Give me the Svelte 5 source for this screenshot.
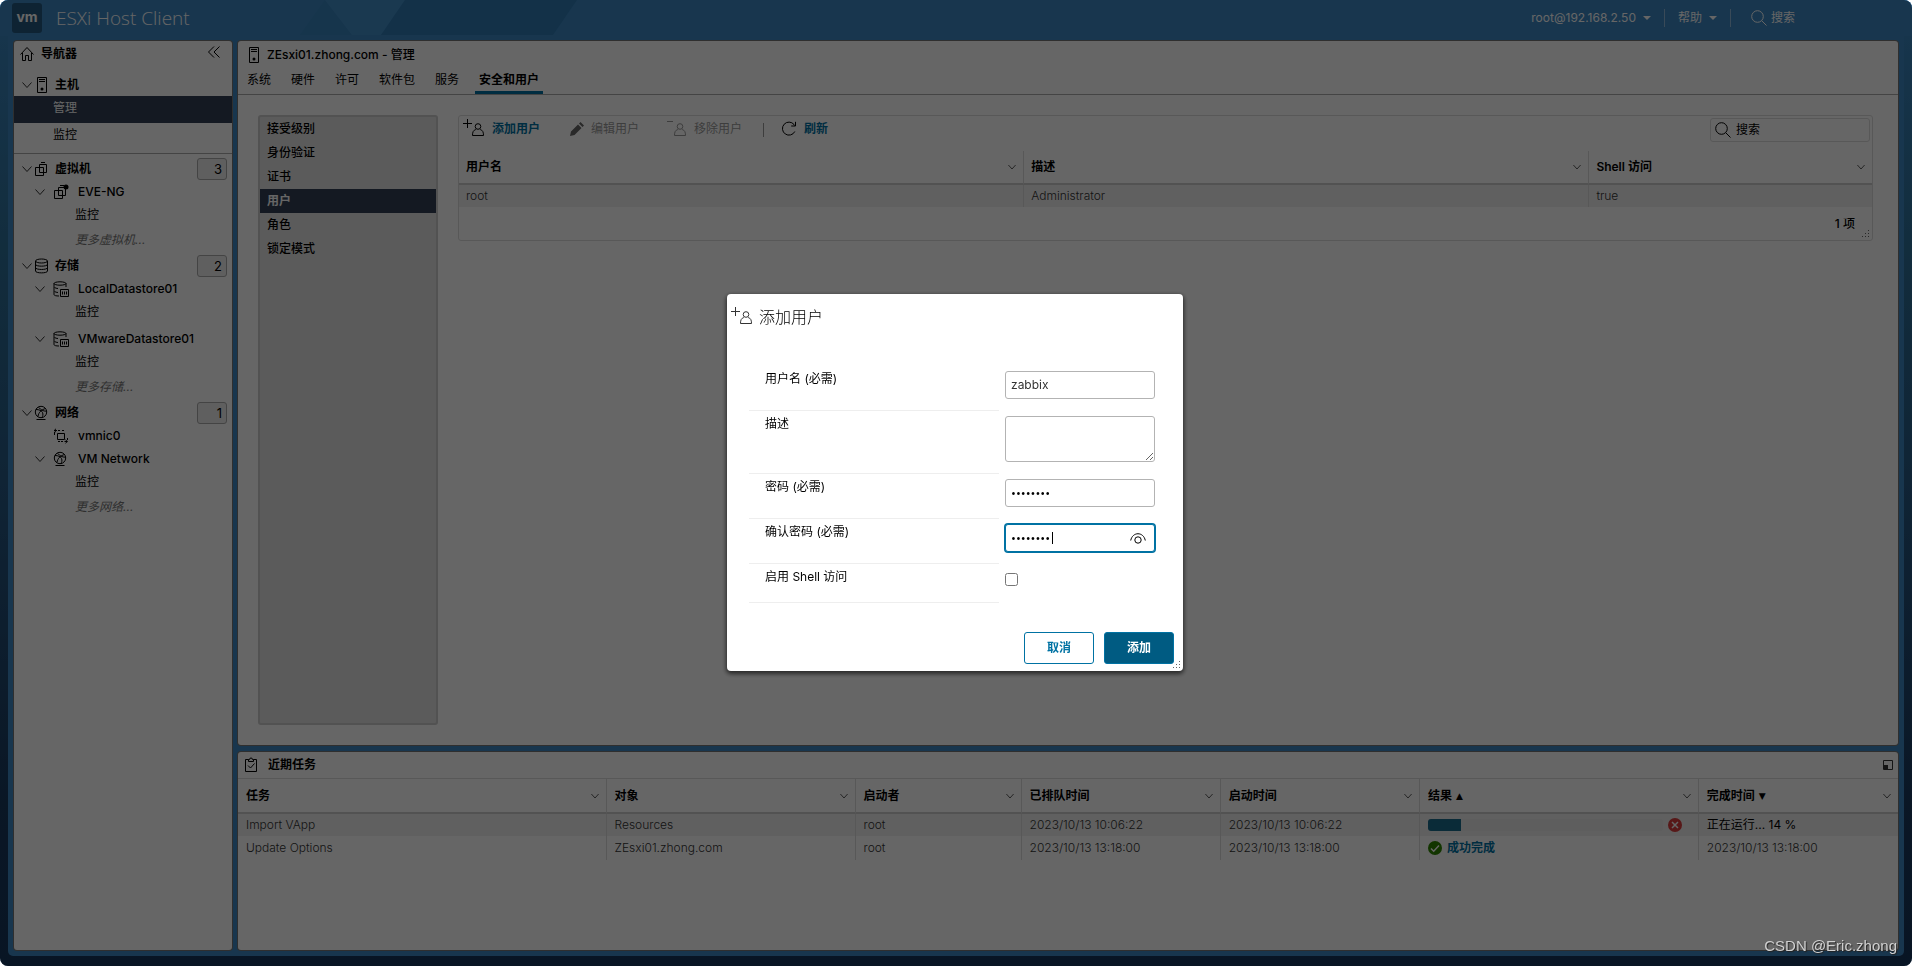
<script>
  let username = $state('zabbix');
  let description = $state('');
  let password = $state('password');
  let confirm = $state('password');
  let shellAccess = $state(false);

  const tabs = ['系统', '硬件', '许可', '软件包', '服务', '安全和用户'];
  const menu = ['接受级别', '身份验证', '证书', '用户', '角色', '锁定模式'];
  const userCols = ['用户名', '描述', 'Shell 访问'];

  const groups = [
    {
      name: '虚拟机', icon: 'vm', count: 3, more: '更多虚拟机...',
      items: [{ name: 'EVE-NG', icon: 'vmOn', open: true }],
    },
    {
      name: '存储', icon: 'storage', count: 2, more: '更多存储...',
      items: [
        { name: 'LocalDatastore01', icon: 'datastore', open: true },
        { name: 'VMwareDatastore01', icon: 'datastore', open: true },
      ],
    },
    {
      name: '网络', icon: 'network', count: 1, more: '更多网络...',
      items: [
        { name: 'vmnic0', icon: 'nic', open: false },
        { name: 'VM Network', icon: 'network', open: true },
      ],
    },
  ];

  const taskCols = [
    { name: '任务', width: 22.2 },
    { name: '对象', width: 15 },
    { name: '启动者', width: 10 },
    { name: '已排队时间', width: 12 },
    { name: '启动时间', width: 12 },
    { name: '结果', width: 16.8, sort: '▲' },
    { name: '完成时间', width: 12, sort: '▼' },
  ];

  const tasks = [
    { name: 'Import VApp', target: 'Resources', by: 'root', queued: '2023/10/13 10:06:22', started: '2023/10/13 10:06:22', progress: 14, done: '正在运行... 14 %' },
    { name: 'Update Options', target: 'ZEsxi01.zhong.com', by: 'root', queued: '2023/10/13 13:18:00', started: '2023/10/13 13:18:00', result: '成功完成', done: '2023/10/13 13:18:00' },
  ];
</script>

{#snippet icon(name)}
  <svg class="icon" viewBox="0 0 16 16" aria-hidden="true">
    {#if name === 'home'}
      <path d="M1.500 8.500 8 1.500l6.500 7M3.500 7v7.500h3v-5h3v5h3V7" />
    {:else if name === 'host'}
      <path d="M3.500 .5h9v15h-9zM5 2.500h6M5 4.500h6" /><circle class="solid" cx="8" cy="12" r="1.500" />
    {:else if name === 'vm' || name === 'vmOn'}
      <path d="M1.500 6.500h8v8h-8zM5.500 3.500h7v8h-7zM7 1.500h4" />
      {#if name === 'vmOn'}<circle class="solid" cx="13" cy="3" r="2.500" />{/if}
    {:else if name === 'storage'}
      <ellipse cx="7.500" cy="3" rx="6" ry="2" />
      <path d="M1.500 3v10c0 2.500 12 2.500 12 0V3M1.500 6.300c0 2.500 12 2.500 12 0M1.500 9.600c0 2.500 12 2.500 12 0" />
    {:else if name === 'datastore'}
      <ellipse cx="7" cy="2.500" rx="6" ry="1.700" />
      <path d="M1 2.500v11c0 1 2 1.500 5 1.500M13 2.500V6M1.500 6.500c1 .7 2 .8 3.500 1M1.500 10.500c1 .7 2 .8 3.500 1M7.500 8.500h8v7h-8zM9.500 10.500v3M11.500 10.500v3M13.500 10.500v3" />
    {:else if name === 'network'}
      <circle cx="7" cy="7" r="5.700" />
      <path d="M2 4.500c3 0 5.500 1 6.500 3S8.500 11.500 8 12.500M11.500 3.500C8 4.500 4.500 7 4 11.500M4.500 2.200c2.500 2.800 4.500 4 8 4M2.500 14.500h9" />
    {:else if name === 'nic'}
      <path d="M4.500 5.500h7v6h-7zM1 2.500h3M5 2.500h2M9 2.500h2M3 .8 1.200 2.500 3 4.200M14.500 13.500h-3M10 13.500H8M7 13.500H5M12.500 11.800l1.800 1.700-1.800 1.700M1.500 4v3M14.500 10v2" />
    {:else if name === 'clipboard'}
      <path d="M4.500 2.500h-3v12h11v-12h-3M4.500 4.500v-2h1a1.500 1.500 0 0 1 3 0h1v2zM4 8.500l2.500 2.500L10.500 6.500" />
    {:else if name === 'search'}
      <circle cx="6.500" cy="6.500" r="5.800" /><path d="m10.700 10.700 4.800 4.800" />
    {:else if name === 'refresh'}
      <path d="M13.800 10.500A6.500 6.500 0 1 1 13 3.500l1.500 1.500M14.500 .8V5h-4.300" />
    {:else if name === 'pencil'}
      <path class="solid" d="m2 15 1-4.500L10 3.500 13.500 7 6.500 14zM11 2.500l1.500-1.500L16 4.500 14.500 6z" />
    {/if}
  </svg>
{/snippet}

{#snippet addUserIcon()}
  <svg class="add-user" viewBox="0 0 22 22" aria-hidden="true">
    <path d="M0 5.500h9M4.500 1v9" />
    <circle cx="15" cy="8.500" r="2.800" />
    <path d="M12.800 11.500c-2.500.8-3.300 2.500-3.300 6h11c0-3.500-.8-5.200-3.300-6" />
  </svg>
{/snippet}

{#snippet removeUserIcon()}
  <svg class="remove-user" viewBox="0 0 20 22" aria-hidden="true">
    <path d="M0 3.500h6" />
    <circle cx="13" cy="8.500" r="2.800" />
    <path d="M10.800 11.500c-2.500.8-3.300 2.500-3.300 6h11c0-3.500-.8-5.200-3.300-6" />
  </svg>
{/snippet}

{#snippet chevron()}
  <svg class="chevron" viewBox="0 0 10 6" aria-hidden="true"><path d="m.5.5 4.500 5 4.500-5" /></svg>
{/snippet}

{#snippet grip()}
  <svg class="grip" viewBox="0 0 8 8" aria-hidden="true">
    <path d="M6 0h1v1H6zM3 3h1v1H3zM6 3h1v1H6zM0 6h1v1H0zM3 6h1v1H3zM6 6h1v1H6z" />
  </svg>
{/snippet}

<div class="app">
  <header>
    <svg class="facets" viewBox="0 0 1912 36" preserveAspectRatio="xMinYMin slice" aria-hidden="true">
      <path class="dim" d="m325 0 27 35h-52z" />
      <path class="light" d="M325 0h80l-24 35h-29z" />
      <path class="shade" d="M405 0h172l-24 35H381z" />
    </svg>
    <span class="logo">vm</span>
    <h1>ESXi Host Client</h1>
    <nav class="top-links">
      <button>root@192.168.2.50 <i class="caret"></i></button>
      <button>帮助 <i class="caret"></i></button>
      <label class="top-search">{@render icon('search')}<input aria-label="搜索" placeholder="搜索" /></label>
    </nav>
  </header>

  <div class="frame">
    <aside class="panel">
      <div class="nav-title">
        {@render icon('home')}<h2>导航器</h2>
        <button class="collapse" aria-label="«">
          <svg viewBox="0 0 12 12" aria-hidden="true"><path d="M6 .5.500 6 6 11.500M11.500.5 6 6l5.500 5.500" /></svg>
        </button>
      </div>
      <div class="tree host">
        <div class="row group">{@render chevron()}{@render icon('host')}<b>主机</b></div>
        <a class="host-link selected" href="#manage">管理</a>
        <a class="host-link" href="#monitor">监控</a>
      </div>
      <div class="tree">
        {#each groups as group}
          <div class="row group">
            {@render chevron()}{@render icon(group.icon)}<b>{group.name}</b>
            <span class="count">{group.count}</span>
          </div>
          {#each group.items as item}
            <div class="node" class:open={item.open}>
              <div class="row child">
                {#if item.open}{@render chevron()}{:else}<span class="no-chevron"></span>{/if}
                {@render icon(item.icon)}<a href="#{item.name}">{item.name}</a>
              </div>
              {#if item.open}<a class="row leaf" href="#{item.name}-monitor">监控</a>{/if}
            </div>
          {/each}
          <a class="row more" href="#more">{group.more}</a>
        {/each}
      </div>
    </aside>

    <div class="content">
      <main class="panel">
        <div class="main-title">{@render icon('host')}<h2>ZEsxi01.zhong.com - 管理</h2></div>
        <nav class="tabs">
          {#each tabs as tab}
            <button class:active={tab === '安全和用户'}>{tab}</button>
          {/each}
        </nav>
        <div class="main-body">
          <nav class="side-menu">
            {#each menu as entry}
              <button class:active={entry === '用户'}>{entry}</button>
            {/each}
          </nav>
          <section class="users">
            <div class="toolbar">
              <button class="tool">{@render addUserIcon()}添加用户</button>
              <button class="tool" disabled>{@render icon('pencil')}编辑用户</button>
              <button class="tool" disabled>{@render removeUserIcon()}移除用户</button>
              <span class="separator"></span>
              <button class="tool">{@render icon('refresh')}刷新</button>
              <label class="search">{@render icon('search')}<input aria-label="搜索" placeholder="搜索" /></label>
            </div>
            <table>
              <colgroup><col class="wide" /><col class="wide" /><col /></colgroup>
              <thead>
                <tr>
                  {#each userCols as col}
                    <th><div class="th">{col}{@render chevron()}</div></th>
                  {/each}
                </tr>
              </thead>
              <tbody>
                <tr><td>root</td><td>Administrator</td><td>true</td></tr>
              </tbody>
            </table>
            <div class="table-foot">1 项{@render grip()}</div>
          </section>
        </div>
      </main>

      <section class="panel tasks">
        <div class="tasks-title">
          {@render icon('clipboard')}<h2>近期任务</h2>
          <svg class="restore" viewBox="0 0 10 10" aria-hidden="true"><path d="M.5.500h9v9h-9z" /><path class="solid" d="M1 5h4v4H1z" /></svg>
        </div>
        <table>
          <colgroup>
            {#each taskCols as col}<col style="width: {col.width}%" />{/each}
          </colgroup>
          <thead>
            <tr>
              {#each taskCols as col}
                <th>
                  <div class="th">{col.name}{#if col.sort}<span class="sort">{col.sort}</span>{/if}{@render chevron()}</div>
                </th>
              {/each}
            </tr>
          </thead>
          <tbody>
            {#each tasks as task}
              <tr>
                <td>{task.name}</td>
                <td>{task.target}</td>
                <td>{task.by}</td>
                <td>{task.queued}</td>
                <td>{task.started}</td>
                <td>
                  <div class="result">
                    {#if task.result}
                      <svg class="badge ok" viewBox="0 0 14 14" aria-hidden="true"><circle cx="7" cy="7" r="7" /><path d="m3 7.500 2.700 2.700L11 4.500" /></svg>
                      <a href="#task">{task.result}</a>
                    {:else}
                      <div class="bar"><div class="fill" style="width: {task.progress}%"></div></div>
                      <svg class="badge stop" viewBox="0 0 14 14" aria-hidden="true"><circle cx="7" cy="7" r="7" /><path d="m4 4 6 6M10 4l-6 6" /></svg>
                    {/if}
                  </div>
                </td>
                <td class:running={task.progress}>{task.done}</td>
              </tr>
            {/each}
          </tbody>
        </table>
      </section>
    </div>
  </div>
</div>

<div class="backdrop">
  <form class="dialog" role="dialog" aria-labelledby="dialog-title" onsubmit={(e) => e.preventDefault()}>
    <div class="dialog-title">{@render addUserIcon()}<h2 id="dialog-title">添加用户</h2></div>
    <div class="fields">
      <div class="field">
        <label for="username">用户名 (必需)</label>
        <input id="username" type="text" bind:value={username} />
      </div>
      <div class="field">
        <label for="description">描述</label>
        <textarea id="description" bind:value={description}></textarea>
      </div>
      <div class="field">
        <label for="password">密码 (必需)</label>
        <input id="password" type="password" bind:value={password} />
      </div>
      <div class="field">
        <label for="confirm">确认密码 (必需)</label>
        <div class="reveal">
          <input id="confirm" class="focused" type="password" bind:value={confirm} />
          <span class="cursor"></span>
          <svg viewBox="0 0 16 11" aria-hidden="true"><path d="M.7 7.500C2.500-1.500 13.500-1.500 15.300 7.500" /><circle cx="8" cy="7" r="3.200" /></svg>
        </div>
      </div>
      <div class="field">
        <label for="shell">启用 Shell 访问</label>
        <input id="shell" type="checkbox" bind:checked={shellAccess} />
      </div>
    </div>
    <div class="actions">
      <button type="button" class="btn">取消</button>
      <button type="submit" class="btn primary">添加</button>
    </div>
    {@render grip()}
  </form>
</div>

<div class="watermark">CSDN @Eric.zhong</div>

<style>
  :global(body) {
    background: #fff;
    font-family: Inter, 'Noto Sans CJK SC', sans-serif;
    font-size: 12px;
    line-height: 16px;
    color: #000;
  }

  .app {
    box-sizing: border-box;
    min-height: 100vh;
    display: flex;
    flex-direction: column;
    padding: 0 8px 10px;
    background: linear-gradient(#3c88c4, #2e7099 26%, #285a85 50%, #1a3a5e 83%, #16355a);
    border-radius: 8px;
    overflow: hidden;
  }

  h1, h2 {
    margin: 0;
    font-size: 12px;
    font-weight: 600;
  }

  button, input, textarea {
    font: inherit;
    color: inherit;
  }

  button {
    border: 0;
    padding: 0;
    background: none;
    cursor: pointer;
  }

  a {
    color: inherit;
    text-decoration: none;
  }

  svg {
    flex: none;
    fill: none;
    stroke: currentColor;
  }

  .icon {
    width: 16px;
    height: 16px;
  }

  .solid {
    fill: currentColor;
    stroke: none;
  }

  .chevron {
    width: 10px;
    height: 6px;
    color: #333;
  }

  .add-user {
    width: 22px;
    height: 22px;
  }

  .remove-user {
    width: 20px;
    height: 22px;
  }

  .grip {
    position: absolute;
    right: 2px;
    bottom: 2px;
    width: 8px;
    height: 8px;
    fill: #666;
    stroke: none;
  }

  header {
    display: flex;
    align-items: center;
    height: 36px;
    margin: 0 -8px;
    padding: 0 12px;
    background: #3c88c4;
    color: #fff;
    position: relative;
  }

  .facets {
    position: absolute;
    inset: 0;
    width: 100%;
    height: 36px;
    stroke: none;
  }

  .dim {
    fill: #3984bd;
  }

  .shade {
    fill: #307cb4;
  }

  .light {
    fill: #438fc9;
  }

  .logo {
    position: relative;
    width: 30px;
    height: 30px;
    border-radius: 3px;
    background: #25587f;
    font: 700 14px/28px Inter, sans-serif;
    text-align: center;
  }

  h1 {
    position: relative;
    margin-left: 14px;
    font: 300 19px/26px 'Open Sans', sans-serif;
  }

  .top-links {
    position: relative;
    margin-left: auto;
    margin-right: 69px;
    display: flex;
    align-items: center;
  }

  .top-links button {
    display: flex;
    align-items: center;
    gap: 7px;
    height: 18px;
    padding: 0 13px;
    border-right: 1px solid #8fb8dc;
  }

  .caret {
    border: 4px solid transparent;
    border-top-color: #fff;
    border-bottom: 0;
  }

  .top-search {
    display: flex;
    align-items: center;
    gap: 4px;
    padding-left: 20px;
  }

  .top-search input {
    width: 60px;
    padding: 0;
    border: 0;
    background: none;
  }

  input::placeholder {
    color: inherit;
    opacity: 1;
  }

  .frame {
    flex: 1;
    display: flex;
    gap: 6px;
    padding: 5px 6px 6px;
    background: #3c88c4;
    border-radius: 0 0 5px 5px;
  }

  .panel {
    background: #fff;
    border-radius: 3px;
    box-shadow: 0 0 0 1px #777;
  }

  aside {
    width: 218px;
    flex: none;
  }

  .content {
    flex: 1;
    min-width: 0;
    display: flex;
    flex-direction: column;
    gap: 7px;
  }

  .nav-title {
    display: flex;
    align-items: center;
    height: 26px;
    padding: 0 12px 5px 5px;
    gap: 6px;
  }

  .collapse {
    margin-left: auto;
    height: 16px;
  }

  .collapse svg {
    width: 12px;
    height: 12px;
  }

  .row {
    display: flex;
    align-items: center;
    height: 23px;
  }

  .group {
    padding: 0 5px 0 8px;
    gap: 2px;
  }

  .group b {
    margin-left: 3px;
    font-weight: 600;
  }

  .count {
    box-sizing: border-box;
    width: 30px;
    height: 22px;
    margin-left: auto;
    padding: 0 4px;
    border: 1px solid #aaa;
    border-radius: 3px;
    background: #eee;
    font-size: 13px;
    line-height: 20px;
    text-align: right;
  }

  .host {
    padding: 1px 0 6px;
    border-bottom: 1px solid #aaa;
    margin-bottom: 3px;
  }

  .host-link {
    display: block;
    height: 24px;
    padding-left: 39px;
    line-height: 24px;
  }

  .host-link.selected {
    height: 27px;
    background: #324056;
    color: #fff;
  }

  .child {
    padding-left: 21px;
    gap: 8px;
  }

  .child a {
    margin-left: 1px;
    font-weight: 500;
  }

  .no-chevron {
    width: 10px;
  }

  .node.open + .node.open {
    margin-top: 4px;
  }

  .leaf, .more {
    padding-left: 61px;
  }

  .more {
    height: 28px;
    color: #777;
    font-style: italic;
  }

  main {
    flex: 1;
    display: flex;
    flex-direction: column;
  }

  .main-title {
    display: flex;
    align-items: center;
    gap: 5px;
    height: 27px;
    padding-left: 8px;
  }

  .main-title h2 {
    font-weight: 500;
  }

  .tabs {
    display: flex;
    gap: 12px;
    height: 26px;
    padding-left: 5px;
    border-bottom: 1px solid #aaa;
  }

  .tabs button {
    padding: 0 4px;
    border-bottom: 3px solid transparent;
  }

  .tabs .active {
    border-color: #0072a3;
    font-weight: 600;
  }

  .main-body {
    flex: 1;
    display: flex;
    gap: 20px;
    padding: 20px 25px 20px 20px;
  }

  .side-menu {
    box-sizing: border-box;
    width: 180px;
    flex: none;
    border: 2px solid #ccc;
    border-radius: 3px;
    background: #e3e3e3;
  }

  .side-menu button {
    display: block;
    width: 100%;
    height: 24px;
    padding-left: 7px;
    text-align: left;
    font-weight: 500;
  }

  .side-menu .active {
    background: #324056;
    color: #fff;
    font-weight: 600;
  }

  .users {
    flex: 1;
    min-width: 0;
    align-self: flex-start;
    border: 1px solid #ddd;
    border-radius: 3px;
    position: relative;
  }

  .toolbar {
    display: flex;
    align-items: flex-start;
    height: 33px;
    padding: 2px 2px 0 4px;
    gap: 28px;
  }

  .tool {
    display: flex;
    align-items: center;
    gap: 7px;
    height: 22px;
    color: #0072a3;
    font-weight: 600;
  }

  .tool svg {
    color: #000;
  }

  .tool:disabled {
    font-weight: 400;
  }

  .tool:disabled, .tool:disabled svg {
    color: #999;
  }

  .tool:disabled .solid {
    fill: #666;
  }

  .separator {
    width: 1px;
    height: 14px;
    margin: 5px -11px 0 -7px;
    background: #999;
  }

  .search {
    box-sizing: border-box;
    display: flex;
    align-items: center;
    gap: 5px;
    width: 160px;
    height: 24px;
    margin-left: auto;
    padding-left: 4px;
    border: 1px solid #ddd;
    border-radius: 3px;
  }

  .search input {
    flex: 1;
    min-width: 0;
    border: 0;
    padding: 0;
    background: none;
  }

  table {
    width: 100%;
    table-layout: fixed;
    border-collapse: separate;
    border-spacing: 0;
  }

  .wide {
    width: 40%;
  }

  th, td {
    padding: 0 7px;
    text-align: left;
    border-right: 1px solid #ddd;
  }

  th:last-child, td:last-child {
    border-right: 0;
  }

  th {
    height: 32px;
    border-bottom: 2px solid #ccc;
    font-weight: 600;
  }

  .th {
    display: flex;
    align-items: center;
  }

  .th .chevron {
    width: 8px;
    margin-left: auto;
  }

  .sort {
    margin-left: 4px;
    font: 9px/12px 'DejaVu Sans', sans-serif;
  }

  td {
    height: 24px;
    color: #333;
    font-weight: 300;
  }

  .running {
    color: #000;
    font-weight: 400;
  }

  tbody tr:nth-child(odd) td {
    height: 22px;
    background: #f0f0f0;
  }

  .table-foot {
    height: 33px;
    padding-right: 17px;
    line-height: 33px;
    text-align: right;
    font-weight: 500;
  }

  .tasks {
    height: 198px;
    flex: none;
  }

  .tasks th, .tasks td {
    padding: 0 7px 0 8px;
  }

  .tasks-title {
    display: flex;
    align-items: center;
    gap: 8px;
    height: 26px;
    padding: 0 5px 0 6px;
    border-bottom: 1px solid #ddd;
  }

  .tasks th {
    height: 33px;
  }

  .restore {
    width: 10px;
    height: 10px;
    margin-left: auto;
    color: #333;
  }

  .result {
    display: flex;
    align-items: center;
    gap: 5px;
  }

  .result a {
    color: #0072a3;
    font-weight: 600;
  }

  .bar {
    flex: 1;
    height: 12px;
    border-radius: 3px;
    background: #eaeaea;
    overflow: hidden;
  }

  .fill {
    height: 100%;
    background: #196b8c;
  }

  .badge {
    width: 14px;
    height: 14px;
    stroke: #fff;
    stroke-width: 1.500;
  }

  .badge circle {
    stroke: none;
  }

  .ok circle {
    fill: #2f8400;
  }

  .stop {
    margin-right: 9px;
  }

  .stop circle {
    fill: #d93c3c;
  }

  .backdrop {
    position: fixed;
    inset: 0;
    display: flex;
    align-items: center;
    justify-content: center;
    padding: 0 2px 2px 0;
    background: rgba(0, 0, 0, 0.6);
    border-radius: 8px;
  }

  .dialog {
    position: relative;
    box-sizing: border-box;
    width: 456px;
    padding: 6px 9px 7px 4px;
    border-radius: 4px;
    background: #fff;
    box-shadow: 0 2px 4px 1px rgba(0, 0, 0, 0.6);
  }

  .dialog-title {
    display: flex;
    align-items: center;
    gap: 6px;
    height: 34px;
  }

  .dialog-title svg {
    color: #333;
  }

  .dialog-title h2 {
    font-size: 16px;
    line-height: 24px;
    font-weight: 300;
  }

  .fields {
    padding: 32px 0 0 18px;
  }

  .field {
    display: grid;
    grid-template-columns: 250px 150px;
    column-gap: 6px;
  }

  .field > label {
    padding: 5px 16px;
    border-bottom: 1px solid #eee;
  }

  .field input:not([type='checkbox']), .field textarea {
    box-sizing: border-box;
    display: block;
    width: 150px;
    height: 28px;
    margin: 5px 0 12px;
    padding: 0 5px;
    border: 1px solid #b3b3b3;
    border-radius: 3px;
    background: #fff;
    color: #333;
    outline: 0;
  }

  .field textarea {
    height: 46px;
    resize: vertical;
  }

  .field input[type='password'] {
    color: #000;
    font: 13px/16px 'Open Sans', sans-serif;
  }

  .field input[type='checkbox'] {
    margin: 9px 0 17px;
    width: 13px;
    height: 13px;
  }

  .field .focused:not([type='checkbox']) {
    border-color: #0072a3;
    box-shadow: 0 0 0 1px #0072a3;
  }

  .reveal {
    position: relative;
  }

  .reveal svg {
    position: absolute;
    right: 9px;
    top: 14px;
    width: 16px;
    height: 11px;
  }

  .cursor {
    position: absolute;
    left: 47px;
    top: 13px;
    width: 1px;
    height: 12px;
    background: #000;
  }

  .actions {
    display: flex;
    justify-content: flex-end;
    gap: 10px;
    padding-top: 29px;
  }

  .btn {
    box-sizing: border-box;
    width: 70px;
    height: 32px;
    border: 1px solid #0072a3;
    border-radius: 3px;
    color: #0072a3;
    font-weight: 600;
  }

  .primary {
    background: #005b82;
    color: #fff;
  }

  .watermark {
    position: fixed;
    right: 15px;
    bottom: 9px;
    color: #d0d0d0;
    font: 15px/22px 'Liberation Sans', sans-serif;
    text-shadow: 1px 1px 1px #222;
  }
</style>
